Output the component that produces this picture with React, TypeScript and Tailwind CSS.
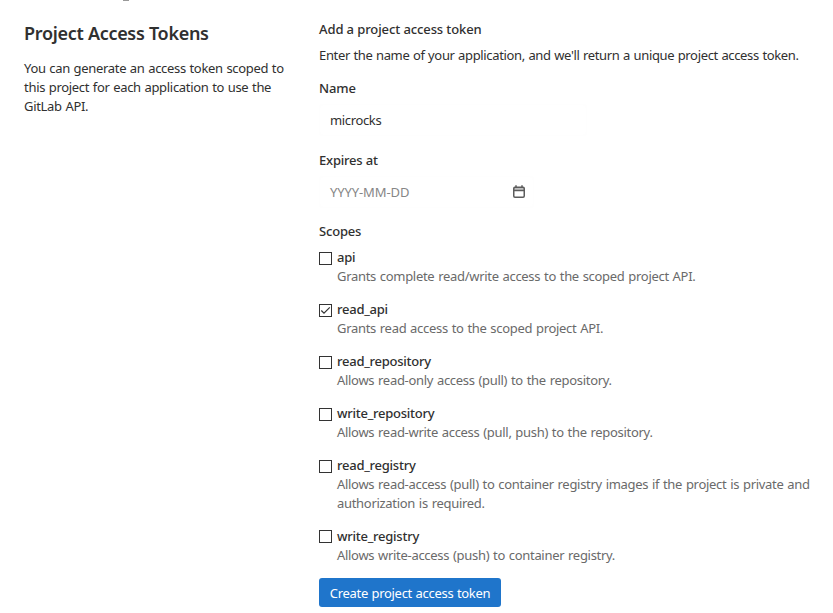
type Scope = { name: string; text: string; checked?: boolean };

const scopes: Scope[] = [
  { name: "api", text: "Grants complete read/write access to the scoped project API." },
  { name: "read_api", text: "Grants read access to the scoped project API.", checked: true },
  { name: "read_repository", text: "Allows read-only access (pull) to the repository." },
  { name: "write_repository", text: "Allows read-write access (pull, push) to the repository." },
  {
    name: "read_registry",
    text: "Allows read-access (pull) to container registry images if the project is private and authorization is required.",
  },
  { name: "write_registry", text: "Allows write-access (push) to container registry." },
];

function CalendarIcon() {
  return (
    <svg width="14" height="14" viewBox="0 0 14 14" fill="none" stroke="#5c5c5c" className="shrink-0">
      <path d="M2 3.2h10v2.6H2z" fill="#b0b0b0" stroke="none" />
      <rect x="1.75" y="2.25" width="10.5" height="10" rx="1.2" strokeWidth="1.5" />
      <path d="M2 5.6h10" strokeWidth="1.3" />
      <path d="M4 0.2v2.3M10 0.2v2.3" strokeWidth="1.5" />
    </svg>
  );
}

function Checkbox({ checked }: { checked?: boolean }) {
  return (
    <span role="checkbox" aria-checked={!!checked} className="mt-1 h-[13px] w-[13px] shrink-0 border border-[#333] bg-white group-last:mt-[3px]">
      {checked && (
        <svg width="11" height="11" viewBox="0 0 11 11" fill="none" stroke="#333" strokeWidth="1.2">
          <path d="M1.3 5.5l2.7 2.7L9.8 2.4" />
        </svg>
      )}
    </span>
  );
}

export default function App() {
  return (
    <main className="flex h-[613px] w-[833px] overflow-hidden bg-white font-['Noto_Sans','Open_Sans',sans-serif] text-[13px] leading-[19px] text-[#303030]">
      <section className="ml-6 w-[295px] shrink-0">
        <div className="flex h-[21px]">
          <span className="ml-[99px] h-px w-1.5 bg-[#999]" />
        </div>
        <h1 className="text-[18px] leading-6 font-semibold tracking-[-0.3px] whitespace-nowrap">Project Access Tokens</h1>
        <p className="mt-[14px] w-[275px] tracking-[-0.3px] [word-spacing:0.5px]">
          You can generate an access token scoped to
          <br />
          this project for each application to use the
          <br />
          GitLab API.
        </p>
      </section>

      <form className="w-[500px] shrink-0 pt-5">
        <h2 className="font-medium tracking-[-0.1px]">Add a project access token</h2>
        <p className="mt-[7px] tracking-[-0.35px] whitespace-nowrap [word-spacing:0.5px]">
          Enter the name of your application, and we'll return a unique project access token.
        </p>
        <div className="mt-[14px] font-medium tracking-[-0.1px]">Name</div>
        <div className="mt-1.5 flex h-8 w-[268px] items-center rounded border border-[#fefefe] px-2.5 tracking-[-0.35px]">microcks</div>
        <div className="mt-[15px] font-medium tracking-[-0.2px]">Expires at</div>
        <div className="mt-1.5 flex h-8 w-[215px] items-center justify-between rounded border border-[#fefefe] pr-[7px] pl-2.5 tracking-[-0.1px] text-[#868686]">
          YYYY-MM-DD
          <CalendarIcon />
        </div>
        <div className="mt-[14px] font-medium tracking-[-0.2px]">Scopes</div>
        <div className="mt-[7px] flex flex-col gap-[14px]">
          {scopes.map((s) => (
            <div key={s.name} className="group flex gap-[5px]">
              <Checkbox checked={s.checked} />
              <div>
                <div className="font-medium tracking-[-0.25px]">{s.name}</div>
                <div className="w-[482px] tracking-[-0.3px] text-[#6a6a6a] [word-spacing:0.7px]">{s.text}</div>
              </div>
            </div>
          ))}
        </div>
        <button type="button" className="mt-[13px] h-[29px] w-[182px] rounded-[3px] bg-[#1f75cb] pt-0.5 tracking-[-0.3px] whitespace-nowrap text-white [word-spacing:0.5px]">
          Create project access token
        </button>
      </form>
    </main>
  );
}
